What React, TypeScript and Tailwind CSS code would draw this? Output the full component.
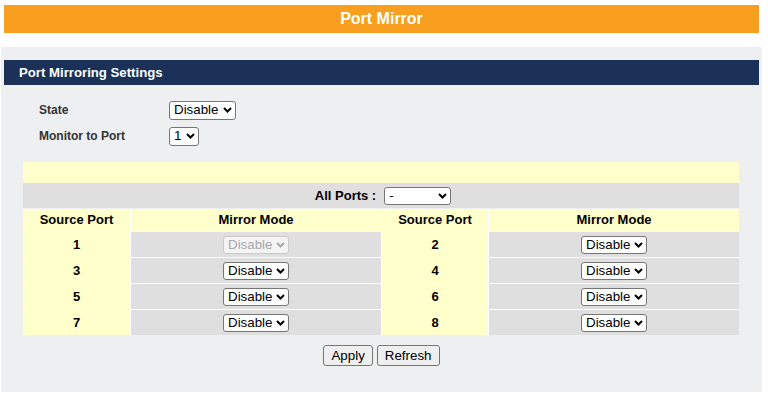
import React from "react";

function Chevron() {
  return (
    <svg
      className="pointer-events-none absolute right-[4px] top-1/2 -translate-y-1/2"
      width="9"
      height="6"
      viewBox="0 0 9 6"
    >
      <path d="M1 1 L4.5 4.5 L8 1" fill="none" stroke="currentColor" strokeWidth="2" />
    </svg>
  );
}

function Sel({
  value,
  w,
  h,
  disabled,
}: {
  value: string;
  w: string;
  h: string;
  disabled?: boolean;
}) {
  return (
    <span
      className={
        "relative inline-block align-middle font-normal " +
        w +
        " " +
        h +
        (disabled ? " text-[#a8a8a8]" : " text-black")
      }
    >
      <select
        disabled={disabled}
        defaultValue={value}
        className={
          "block w-full h-full appearance-none rounded-[3px] border pl-[4px] pr-[14px] text-[13.33px] font-normal leading-none " +
          (disabled ? "border-[#c9c9c9] bg-[#f4f4f4]" : "border-[#767676] bg-white")
        }
      >
        <option>{value}</option>
      </select>
      <Chevron />
    </span>
  );
}

const rows: [number, number][] = [
  [1, 2],
  [3, 4],
  [5, 6],
  [7, 8],
];

export default function App() {
  return (
    <div className="w-[768px] h-[395px] bg-white font-['Liberation_Sans',Arial,sans-serif] overflow-hidden">
      <div className="ml-[4px] mt-[5px] w-[755px] h-[28px] bg-[#f89f1f] flex items-center justify-center text-white font-bold text-[16px]">
        Port Mirror
      </div>
      <div className="ml-[1px] mt-[14px] w-[761px] h-[345px] bg-[#eeeff0] pt-[13px]">
        <div className="ml-[3px] w-[755px] h-[25px] bg-[#1b3158] flex items-center pl-[15px] text-white font-bold text-[13.2px]">
          Port Mirroring Settings
        </div>
        <div className="mt-[12px] ml-[38px] text-[12px] font-bold text-[#333]">
          <div className="flex items-center h-[26px]">
            <div className="w-[130px]">State</div>
            <Sel value="Disable" w="w-[67px]" h="h-[19px]" />
          </div>
          <div className="flex items-center h-[26px]">
            <div className="w-[130px]">Monitor to Port</div>
            <Sel value="1" w="w-[30px]" h="h-[19px]" />
          </div>
        </div>
        <div className="mt-[13px] ml-[22px] w-[716px] text-[13px] font-bold text-black">
          <div className="h-[21px] bg-[#ffffcc]" />
          <div className="h-[25px] bg-[#dfdfdf] flex items-center justify-center gap-[8px] pl-[4px]">
            <span>All Ports :</span>
            <Sel value="-" w="w-[67px]" h="h-[18px]" />
          </div>
          <div className="mt-px grid grid-cols-[107px_250px_106px_250px] gap-px bg-white">
            <div className="h-[22px] bg-[#ffffcc] flex items-center justify-center">Source Port</div>
            <div className="h-[22px] bg-[#ffffcc] flex items-center justify-center">Mirror Mode</div>
            <div className="h-[22px] bg-[#ffffcc] flex items-center justify-center">Source Port</div>
            <div className="h-[22px] bg-[#ffffcc] flex items-center justify-center">Mirror Mode</div>
            {rows.map(([a, b]) => (
              <React.Fragment key={a}>
                <div className="h-[25px] bg-[#ffffcc] flex items-center justify-center">{a}</div>
                <div className="h-[25px] bg-[#dfdfdf] flex items-center justify-center">
                  <Sel value="Disable" w="w-[66px]" h="h-[18px]" disabled={a === 1} />
                </div>
                <div className="h-[25px] bg-[#ffffcc] flex items-center justify-center">{b}</div>
                <div className="h-[25px] bg-[#dfdfdf] flex items-center justify-center">
                  <Sel value="Disable" w="w-[66px]" h="h-[18px]" />
                </div>
              </React.Fragment>
            ))}
          </div>
        </div>
        <div className="mt-[10px] flex justify-center gap-[4px] text-[13.33px] text-black">
          <button className="h-[21px] px-[7px] bg-[#efefef] border border-[#767676] rounded-[3px]">Apply</button>
          <button className="h-[21px] px-[7px] bg-[#efefef] border border-[#767676] rounded-[3px]">Refresh</button>
        </div>
      </div>
    </div>
  );
}
